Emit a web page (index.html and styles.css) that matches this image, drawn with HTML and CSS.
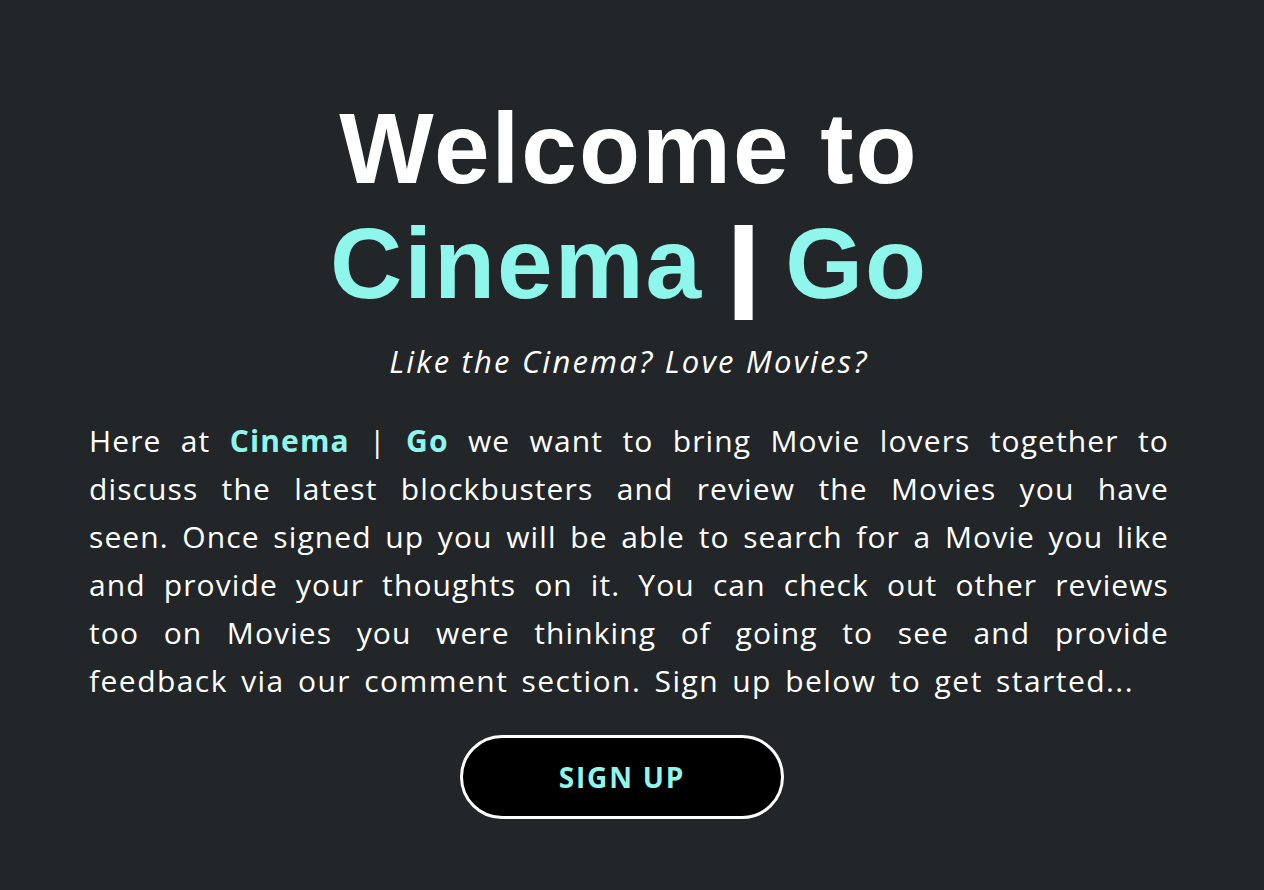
FILE: index.html
```html
<!DOCTYPE html>
<html lang="en">
<head>
<meta charset="utf-8">
<title>Cinema | Go</title>
<link rel="stylesheet" href="styles.css">
</head>
<body>
<main class="hero">
  <h1 class="title">
    <span class="title-line">Welcome to</span>
    <span class="title-line accent">Cinema<span class="bar">|</span>Go</span>
  </h1>
  <p class="tagline">Like the Cinema? Love Movies?</p>
  <p class="intro">
    <span class="ln">Here at <strong class="accent">Cinema</strong> | <strong class="accent">Go</strong> we want to bring Movie lovers together to</span>
    <span class="ln">discuss the latest blockbusters and review the Movies you have</span>
    <span class="ln">seen. Once signed up you will be able to search for a Movie you like</span>
    <span class="ln">and provide your thoughts on it. You can check out other reviews</span>
    <span class="ln">too on Movies you were thinking of going to see and provide</span>
    <span class="ln last">feedback via our comment section. Sign up below to get started...</span>
  </p>
  <a class="btn" href="#">SIGN UP</a>
</main>
</body>
</html>
```
FILE: styles.css
```css
html, body {
  margin: 0;
  padding: 0;
  background: #222629;
  height: 100%;
}
body {
  font-family: "Open Sans", "DejaVu Sans", sans-serif;
  color: #ffffff;
  overflow: hidden;
}
.hero {
  width: 1080px;
  margin: 0 0 0 89px;
  padding-top: 91px;
  display: flex;
  flex-direction: column;
  align-items: center;
}
.title {
  margin: 0;
  font-family: "Liberation Sans", Arial, sans-serif;
  font-size: 100px;
  font-weight: 700;
  line-height: 115px;
  letter-spacing: 2px;
  text-align: center;
  display: flex;
  flex-direction: column;
  align-items: center;
}
.title-line { display: block; }
.accent { color: #8ff6ec; }
.bar {
  color: #ffffff;
  display: inline-block;
  margin: 0 25px 0 27px;
  transform: scaleX(1.4);
}
.tagline {
  margin: 20px 0 0;
  font-size: 31px;
  font-style: italic;
  line-height: 40px;
  letter-spacing: 2.2px;
}
.intro {
  margin: 36px 0 0;
  width: 100%;
  font-size: 30px;
  line-height: 48px;
  letter-spacing: 1.1px;
  word-spacing: 4px;
}
.intro strong { font-weight: 700; }
.ln {
  display: block;
  white-space: nowrap;
  text-align: justify;
  text-align-last: justify;
}
.ln.last {
  text-align: left;
  text-align-last: left;
  letter-spacing: 1.45px;
}
.btn {
  margin: 30px 14px 0 0;
  width: 318px;
  height: 78px;
  border: 3px solid #ffffff;
  border-radius: 42px;
  background: #000000;
  color: #8ff6ec;
  font-size: 28px;
  font-weight: 700;
  letter-spacing: 1.8px;
  text-decoration: none;
  display: flex;
  align-items: center;
  justify-content: center;
}
```
